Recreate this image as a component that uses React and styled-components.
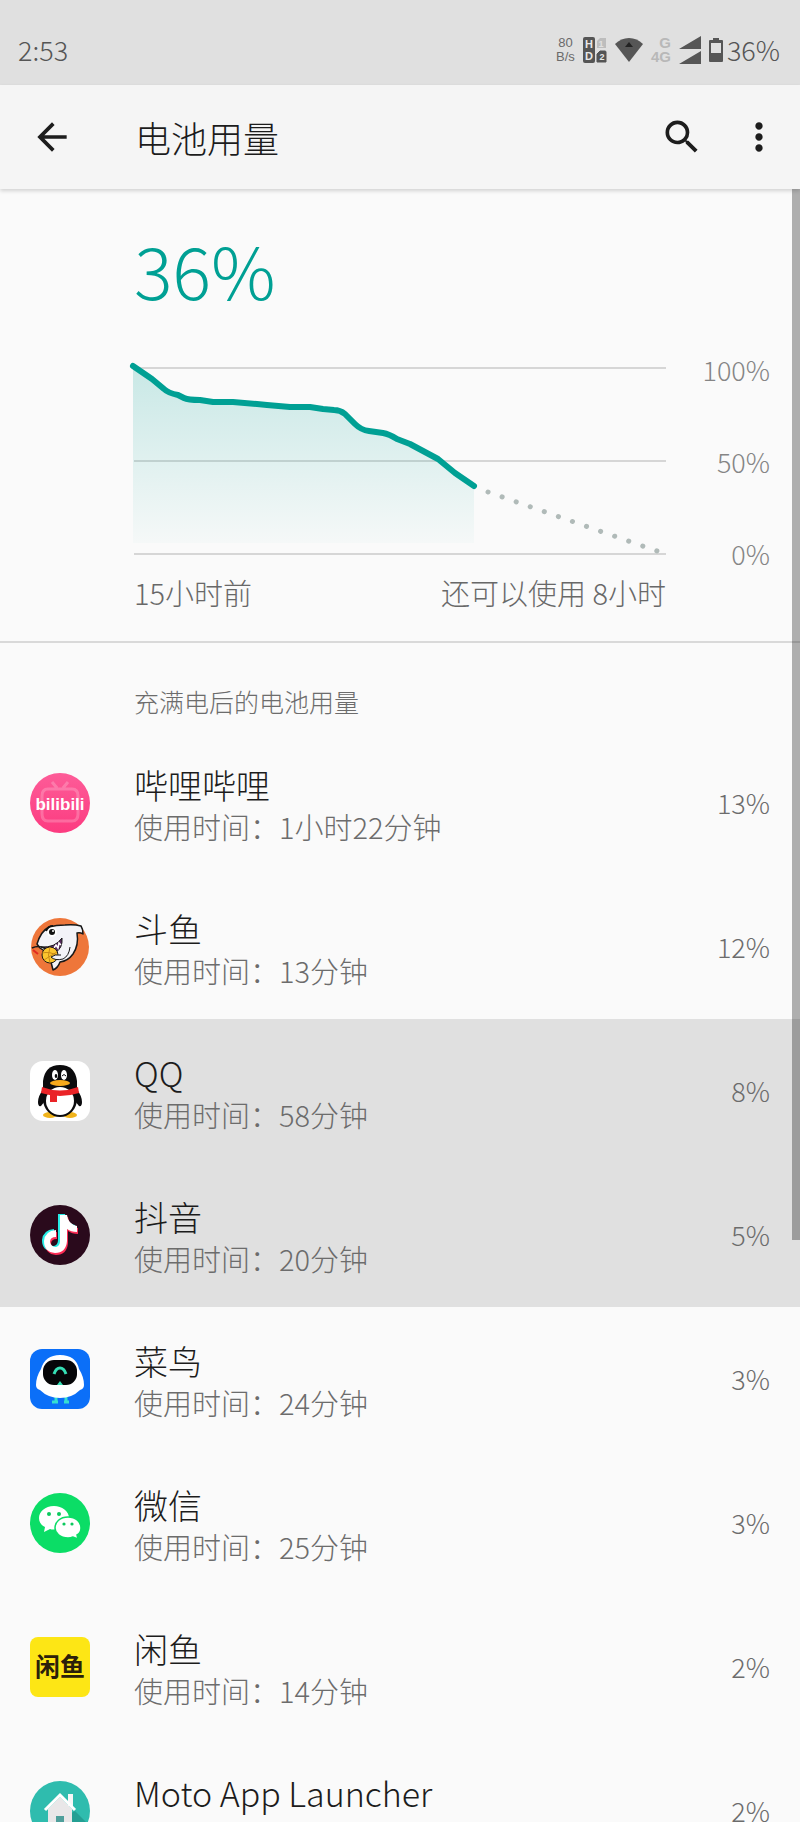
import React from "react"
import styled, { createGlobalStyle, css } from 'styled-components'
import { MdArrowBack, MdSearch, MdMoreVert } from 'react-icons/md'

const GlobalStyle = createGlobalStyle`
  * {
    box-sizing: border-box;
  }

  body {
    margin: 0;
    background: #fafafa;
    color: #1c1c1c;
    font-family: 'Noto Sans CJK SC', sans-serif;
    font-weight: 300;
  }
`

const Screen = styled.div`
  display: flex;
  flex-direction: column;
  height: 100vh;
  overflow: hidden;
`

const StatusBar = styled.div`
  display: flex;
  flex: none;
  align-items: center;
  justify-content: space-between;
  height: 85px;
  padding: 14px 20px 0 18px;
  background: #e0e0e0;
  color: #555;
  font-size: 27px;
  line-height: 32px;
`
const StatusGroup = styled.div`
  display: flex;
  align-items: center;
  gap: 8px;
`
const Stacked = styled.div`
  display: flex;
  flex-direction: column;
  align-items: ${props => props.$end ? 'flex-end' : 'center'};
  color: ${props => props.$dim ? '#b8b8b8' : '#6a6a6a'};
  font: ${props => props.$dim ? 'bold 15px' : '13px'} 'Liberation Sans', sans-serif;
  line-height: 14px;
`
const Charge = styled.div`
  display: flex;
  align-items: center;
  gap: 4px;
`

const AppBar = styled.header`
  display: flex;
  flex: none;
  align-items: center;
  height: 104px;
  padding: 0 19px 0 30px;
  background: #f5f5f5;
  box-shadow: 0 2px 4px rgba(0, 0, 0, 0.16);
  z-index: 1;
`
const IconButton = styled.button`
  display: flex;
  padding: 0;
  border: none;
  background: none;
  color: #1d1d1d;
  font-size: 44px;
  cursor: pointer;
`
const Title = styled.h1`
  flex: 1;
  margin: 0 0 0 61px;
  font-size: 36px;
  font-weight: 300;
  line-height: 48px;
`
const Actions = styled.div`
  display: flex;
  gap: 33px;
`

const Viewport = styled.div`
  position: relative;
  flex: 1;
  min-height: 0;
`
const Scroller = styled.main`
  height: 100%;
  overflow-y: auto;
  scrollbar-width: none;
`
const ScrollThumb = styled.div`
  position: absolute;
  top: 0;
  right: 0;
  width: 8px;
  height: 1051px;
  background: rgba(0, 0, 0, 0.3);
`

const Summary = styled.section`
  padding: 44px 30px 29px 134px;
  border-bottom: 2px solid #d9d9d9;
`
const Level = styled.div`
  margin-bottom: 51px;
  color: #00a094;
  font-size: 72px;
  line-height: 72px;
`
const ChartGrid = styled.div`
  display: grid;
  grid-template-columns: 1fr 104px;
  row-gap: 4px;
`
const ChartSvg = styled.svg`
  display: block;
  width: 100%;
  height: 212px;
  overflow: visible;
`
const Scale = styled.div`
  display: flex;
  flex-direction: column;
  align-items: flex-end;
  justify-content: space-between;
  color: #858585;
  font-size: 27px;
  line-height: 28px;
`
const TimeAxis = styled.div`
  display: flex;
  justify-content: space-between;
  color: #686868;
  font-size: 29px;
  line-height: 40px;
`

const Caption = styled.h2`
  height: 88px;
  margin: 0;
  padding: 42px 30px 0 134px;
  color: #6c6c6c;
  font-size: 25px;
  font-weight: 300;
  line-height: 32px;
`
const AppList = styled.ul`
  margin: 0;
  padding: 0;
  list-style: none;
`
const AppRow = styled.li`
  display: flex;
  align-items: center;
  height: 144px;
  padding: 0 30px;
  ${props => props.$pressed && css`
    background: #e0e0e0;
  `}
`
const AppIcon = styled.svg`
  flex: none;
  width: 60px;
  height: 60px;
`
const AppText = styled.div`
  flex: 1;
  margin-left: 44px;
  padding-top: 4px;
`
const AppName = styled.div`
  font-size: 34px;
  line-height: 42px;
`
const AppTime = styled.div`
  color: #6c6c6c;
  font-size: 29px;
  line-height: 40px;
`
const Percent = styled.div`
  color: #6c6c6c;
  font-size: 27px;
  line-height: 40px;
`

const linePath = 'M-1 10 L18 23 L30 33 Q34 37 44 39 L50 42 Q54 44 66 44 L79 46 H99 L123 48 L133 49 L156 51 H176 L189 53 L200 54 Q206 54 211 58 L221 68 Q227 74 235 75 L249 77 Q255 78 263 83 L276 88 L304 103 L321 117 L340 130'

const BatteryChart = () => (
  <ChartSvg viewBox="0 0 532 212" preserveAspectRatio="none" role="img" aria-label="36%">
    <defs>
      <linearGradient id="area" x1="0" y1="10" x2="0" y2="187" gradientUnits="userSpaceOnUse">
        <stop offset="0" stopColor="#00a094" stopOpacity="0.2" />
        <stop offset="1" stopColor="#00a094" stopOpacity="0.02" />
      </linearGradient>
    </defs>
    <path d="M0 12 H532 M0 105 H532 M0 198 H532" stroke="#d6d6d6" strokeWidth="2" />
    <path d={linePath + ' V187 H-1 Z'} fill="url(#area)" />
    <path d="M354 136 L523 195" stroke="#b0bab8" strokeWidth="5" strokeLinecap="round" strokeDasharray="0.1 14.8" />
    <path d={linePath} fill="none" stroke="#00a094" strokeWidth="6" strokeLinecap="round" strokeLinejoin="round" />
  </ChartSvg>
)

const SimIcon = () => (
  <svg width="24" height="26" viewBox="0 0 24 26">
    <rect x="0" y="0" width="12" height="26" rx="2" fill="#555" />
    <path d="M17 1 H23 V11 H14 V4 Z" fill="#bdbdbd" />
    <path d="M17 14 H22 Q23 14 23 15 V25 H14 V17 Z" fill="#555" stroke="#555" />
    <text x="6" y="11" fill="#e8e8e8" fontFamily="Liberation Sans" fontWeight="bold" fontSize="11" textAnchor="middle">H</text>
    <text x="6" y="23" fill="#e8e8e8" fontFamily="Liberation Sans" fontWeight="bold" fontSize="11" textAnchor="middle">D</text>
    <text x="18" y="10" fill="#e0e0e0" fontFamily="Liberation Sans" fontWeight="bold" fontSize="9" textAnchor="middle">1</text>
    <text x="19" y="23" fill="#e8e8e8" fontFamily="Liberation Sans" fontWeight="bold" fontSize="9" textAnchor="middle">2</text>
  </svg>
)

const WifiIcon = () => (
  <svg width="28" height="24" viewBox="0 0 28 24">
    <path d="M14 24 L0 6 Q6 0 14 0 T28 6 Z" fill="#565656" />
    <path d="M14 4 L18 9 H10 Z" fill="#222" />
  </svg>
)

const SignalIcon = () => (
  <svg width="22" height="28" viewBox="0 0 22 28">
    <path d="M22 0 V13 H0 Z M22 15 V28 H0 Z" fill="#565656" />
  </svg>
)

const BatteryIcon = () => (
  <svg width="14" height="24" viewBox="0 0 14 24">
    <path d="M4 0 H10 V2 H13 Q14 2 14 3 V23 Q14 24 13 24 H1 Q0 24 0 23 V3 Q0 2 1 2 H4 Z M2 5 V15 H12 V5 Z" fill="#565656" fillRule="evenodd" />
  </svg>
)

const BilibiliIcon = () => (
  <AppIcon viewBox="0 0 60 60">
    <defs>
      <linearGradient id="bili" x1="0" y1="0" x2="0" y2="1">
        <stop offset="0" stopColor="#fd5c98" />
        <stop offset="1" stopColor="#fc3b80" />
      </linearGradient>
    </defs>
    <circle cx="30" cy="30" r="30" fill="url(#bili)" />
    <path d="M22 9 L27 15 M38 9 L33 15 M18 16 H42 Q48 16 48 23 V41 Q48 48 42 48 H18 Q12 48 12 41 V23 Q12 16 18 16 Z" fill="none" stroke="#fff" strokeOpacity="0.22" strokeWidth="3" />
    <text x="30" y="37" fill="#fff" fontFamily="Liberation Sans" fontWeight="bold" fontSize="17" textAnchor="middle">bilibili</text>
  </AppIcon>
)

const DouyuIcon = () => (
  <AppIcon viewBox="0 0 60 60">
    <circle cx="30" cy="30" r="29" fill="#ee763a" />
    <path d="M7 27 Q11 14 19 10 Q26 8 35 8 Q44 7 51 9 Q53 12 53 17 Q50 15 47 16 Q49 28 43 37 Q38 44 30 45 Q28 51 23 53 Q22 49 21 45 L19 37 L10 31 Z" fill="#f3f3f8" stroke="#181818" strokeWidth="1.5" strokeLinejoin="round" />
    <path d="M11 30 Q25 31 32 21 Q33 31 25 36 Z" fill="#5a2a62" stroke="#181818" />
    <path d="M24 31 L26 28 L28 31 L29 26 L31 28" fill="none" stroke="#fff" strokeWidth="1.5" />
    <circle cx="20" cy="38" r="8" fill="#fbc52e" stroke="#181818" />
    <path d="M12 36 Q20 34 28 39 M20 30 Q17 38 20 46 M14 43 Q20 39 27 35" fill="none" stroke="#c98a16" />
    <path d="M31 38 Q25 37 21 40 Q25 44 33 42 Q39 39 40 30" fill="#f3f3f8" stroke="#181818" />
    <path d="M2 31 Q8 28 15 31" fill="none" stroke="#181818" strokeWidth="1.5" />
    <path d="M3 33 L8 37" stroke="#e12a22" strokeWidth="2" />
    <circle cx="22" cy="15" r="5" fill="#fff" />
    <circle cx="22" cy="15" r="3" fill="#111" />
    <circle cx="23" cy="14" r="1" fill="#fff" />
    <path d="M16 14 Q18 9 23 9" fill="none" stroke="#111" strokeWidth="2" />
  </AppIcon>
)

const QQIcon = () => (
  <AppIcon viewBox="0 0 60 60">
    <rect width="60" height="60" rx="13" fill="#fff" />
    <ellipse cx="20" cy="54" rx="7" ry="3" fill="#f0b31b" />
    <ellipse cx="40" cy="54" rx="7" ry="3" fill="#f0b31b" />
    <path d="M14 27 Q8 35 8 41 Q8 46 11 45 L15 40 Z M46 27 Q52 35 52 41 Q52 46 49 45 L45 40 Z" fill="#0b0b0d" />
    <ellipse cx="30" cy="38" rx="17" ry="18" fill="#0b0b0d" />
    <path d="M13 30 V20 Q15 4 30 4 Q45 4 47 20 V30 Z" fill="#0b0b0d" />
    <ellipse cx="30" cy="40" rx="14" ry="14" fill="#fff" />
    <path d="M12 26 Q30 33 48 26 L49 32 Q30 38 11 32 Z" fill="#ea2327" />
    <path d="M20 33 H27 V41 H20 Z" fill="#ea2327" />
    <ellipse cx="25" cy="14" rx="3" ry="5" fill="#fff" />
    <ellipse cx="34" cy="14" rx="3" ry="5" fill="#fff" />
    <ellipse cx="26" cy="15" rx="1.3" ry="2" fill="#0b0b0d" />
    <path d="M32 15 Q34 12 36 15" fill="none" stroke="#0b0b0d" />
    <ellipse cx="30" cy="22" rx="10" ry="3" fill="#f6a91c" />
  </AppIcon>
)

const notePath = 'M30 10 H37 Q38 19 47 21 V27 Q41 27 37 24 V36 Q36 48 25 48 Q14 47 14 36 Q15 26 26 25 V32 Q20 32 20 37 Q21 42 26 42 Q30 41 30 36 Z'

const DouyinIcon = () => (
  <AppIcon viewBox="0 0 60 60">
    <circle cx="30" cy="30" r="30" fill="#2a0a1c" />
    <path d={notePath} fill="#27ece6" transform="translate(-2 -1)" />
    <path d={notePath} fill="#fb2c55" transform="translate(1 2)" />
    <path d={notePath} fill="#fff" />
  </AppIcon>
)

const CainiaoIcon = () => (
  <AppIcon viewBox="0 0 60 60">
    <rect width="60" height="60" rx="12" fill="#0b6ff8" />
    <path d="M26 46 V52 M36 46 V52 M22 53 H28 M34 53 H39" stroke="#35dfd0" strokeWidth="3" />
    <path d="M30 6 Q46 6 49 20 Q54 28 54 36 Q54 40 50 41 Q42 49 30 49 Q18 49 10 41 Q6 40 6 36 Q6 28 11 20 Q15 6 30 6 Z" fill="#fff" />
    <rect x="13" y="11" width="34" height="25" rx="11" fill="#060608" />
    <path d="M24 25 Q26 19 30 19 Q34 19 36 25" fill="none" stroke="#35dfb4" strokeWidth="3" />
    <path d="M27 36 L30 32 L33 36 Z" fill="#35dfb4" />
  </AppIcon>
)

const WechatIcon = () => (
  <AppIcon viewBox="0 0 60 60">
    <circle cx="30" cy="30" r="30" fill="#0bdd66" />
    <path d="M24 13 C15 13 9 19 9 25 C9 29 11 32 15 34 L14 39 L20 36 Q23 37 26 36 C38 36 39 28 39 25 C39 18 32 13 24 13 Z" fill="#fff" />
    <path d="M38 24 C46 24 51 29 51 35 C51 38 49 41 47 42 L48 46 L43 44 Q41 45 38 45 C30 45 25 40 25 35 C25 29 30 24 38 24 Z" fill="#fff" stroke="#0bdd66" strokeWidth="1.5" />
    <circle cx="19" cy="21" r="2" fill="#0bc95e" />
    <circle cx="29" cy="21" r="2" fill="#0bc95e" />
    <circle cx="34" cy="31" r="1.6" fill="#0bc95e" />
    <circle cx="42" cy="31" r="1.6" fill="#0bc95e" />
  </AppIcon>
)

const XianyuIcon = () => (
  <AppIcon viewBox="0 0 60 60">
    <rect width="60" height="60" rx="8" fill="#fde615" />
    <text x="30" y="39" fill="#2b200a" fontFamily="Noto Sans CJK SC" fontWeight="bold" fontSize="25" textAnchor="middle">闲鱼</text>
  </AppIcon>
)

const LauncherIcon = () => (
  <AppIcon viewBox="0 0 60 60">
    <circle cx="30" cy="30" r="30" fill="#2fbcae" />
    <path d="M45 30 L57 42 Q50 58 32 60 L17 46 Z" fill="#249f93" />
    <path d="M38 13 H43 V25 H38 Z" fill="#f7f7f7" />
    <path d="M18 28 L30 16 L42 28 V46 H18 Z" fill="#e9e7e8" />
    <path d="M15 29 L30 14 L45 29" fill="none" stroke="#fff" strokeWidth="3" />
    <path d="M26 35 H34 V46 H26 Z" fill="#4f9f9b" />
  </AppIcon>
)

const apps = [
  { name: '哔哩哔哩', time: '1小时22分钟', percent: 13, Icon: BilibiliIcon },
  { name: '斗鱼', time: '13分钟', percent: 12, Icon: DouyuIcon },
  { name: 'QQ', time: '58分钟', percent: 8, Icon: QQIcon, pressed: true },
  { name: '抖音', time: '20分钟', percent: 5, Icon: DouyinIcon, pressed: true },
  { name: '菜鸟', time: '24分钟', percent: 3, Icon: CainiaoIcon },
  { name: '微信', time: '25分钟', percent: 3, Icon: WechatIcon },
  { name: '闲鱼', time: '14分钟', percent: 2, Icon: XianyuIcon },
  { name: 'Moto App Launcher', time: '10分钟', percent: 2, Icon: LauncherIcon },
]

export default function BatteryUsagePage() {
  return (
    <>
      <GlobalStyle />
      <Screen>
        <StatusBar>
          <span>2:53</span>
          <StatusGroup>
            <Stacked>
              <span>80</span>
              <span>B/s</span>
            </Stacked>
            <SimIcon />
            <WifiIcon />
            <Stacked $dim $end>
              <span>G</span>
              <span>4G</span>
            </Stacked>
            <SignalIcon />
            <Charge>
              <BatteryIcon />
              <span>36%</span>
            </Charge>
          </StatusGroup>
        </StatusBar>

        <AppBar>
          <IconButton aria-label="返回"><MdArrowBack /></IconButton>
          <Title>电池用量</Title>
          <Actions>
            <IconButton aria-label="搜索"><MdSearch /></IconButton>
            <IconButton aria-label="更多"><MdMoreVert /></IconButton>
          </Actions>
        </AppBar>

        <Viewport>
          <Scroller>
            <Summary>
              <Level>36%</Level>
              <ChartGrid>
                <BatteryChart />
                <Scale>
                  <span>100%</span>
                  <span>50%</span>
                  <span>0%</span>
                </Scale>
                <TimeAxis>
                  <span>15小时前</span>
                  <span>还可以使用 8小时</span>
                </TimeAxis>
              </ChartGrid>
            </Summary>

            <Caption>充满电后的电池用量</Caption>
            <AppList>
              {apps.map(({ name, time, percent, Icon, pressed }) => (
                <AppRow key={name} $pressed={pressed}>
                  <Icon />
                  <AppText>
                    <AppName>{name}</AppName>
                    <AppTime>使用时间：{time}</AppTime>
                  </AppText>
                  <Percent>{percent}%</Percent>
                </AppRow>
              ))}
            </AppList>
          </Scroller>
          <ScrollThumb />
        </Viewport>
      </Screen>
    </>
  )
}
